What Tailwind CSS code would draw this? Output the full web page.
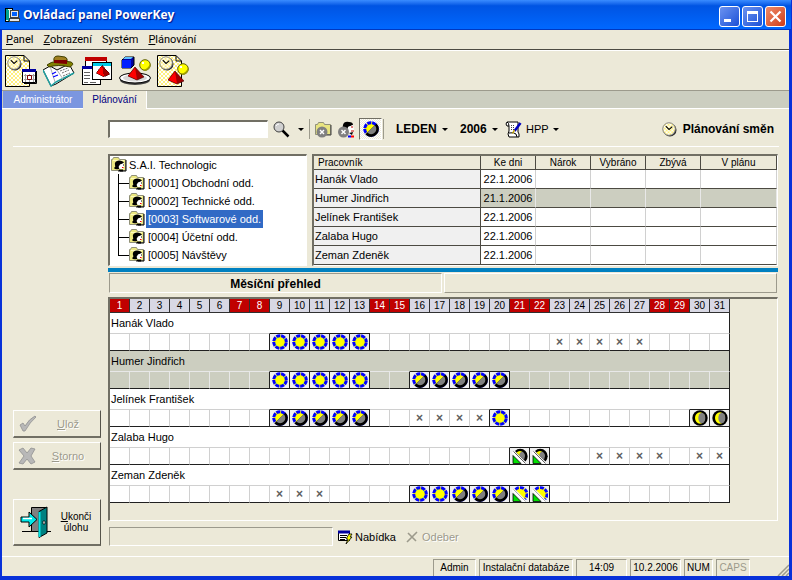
<!DOCTYPE html>
<html lang="cs">
<head>
    <meta charset="UTF-8">
    <meta name="viewport" content="width=device-width, initial-scale=1.0">
    <title>Ovládací panel PowerKey</title>
    <script src="https://cdn.jsdelivr.net/npm/@tailwindcss/browser@4"></script>
</head>
<body class="bg-[#ece9d8] font-['Liberation_Sans',sans-serif] text-[11px] leading-[14px] text-black">

    <!-- Ikony -->
    <svg class="absolute size-0" aria-hidden="true">
        <defs>
            <pattern id="dots" width="4" height="4" patternUnits="userSpaceOnUse">
                <rect width="4" height="4" fill="#fff"/>
                <path d="M0 0h2v2h-2zM2 2h2v2h-2z" fill="#fff080"/>
            </pattern>
            <pattern id="check" width="2" height="2" patternUnits="userSpaceOnUse">
                <rect width="2" height="2" fill="#ece9d8"/>
                <path d="M0 0h1v1h-1zM1 1h1v1h-1z" fill="#fff"/>
            </pattern>
        </defs>
        <symbol id="day" viewBox="0 0 16 16">
            <circle cx="8" cy="8" r="7" fill="#ffff00"/>
            <circle cx="8" cy="8" r="6.3" fill="none" stroke="#0000ff" stroke-width="3" stroke-dasharray="4.1 .85" stroke-dashoffset="-.4"/>
            <circle cx="8" cy="8" r="4.8" fill="none" stroke="#00ffff" stroke-width=".8" stroke-dasharray="1 6.540" stroke-dashoffset="-3.270"/>
        </symbol>
        <symbol id="mixed" viewBox="0 0 16 16">
            <circle cx="8" cy="8" r="7" fill="#ffff00"/>
            <circle cx="8" cy="8" r="6.3" fill="none" stroke="#0000ff" stroke-width="3" stroke-dasharray="4.1 .85" stroke-dashoffset="-.4"/>
            <path d="M13.6 2.4A7.8 7.8 0 0 1 2.4 13.6z" fill="#000"/>
            <path d="M11.8 4.2A5.1 5.1 0 0 1 4.4 11.6z" fill="#808080"/>
        </symbol>
        <symbol id="night" viewBox="0 0 16 16">
            <circle cx="8" cy="8" r="7.700" fill="#000"/>
            <ellipse cx="8" cy="8" rx="5" ry="5.800" fill="#ffff00"/>
            <ellipse cx="9.800" cy="8" rx="3.500" ry="5.300" fill="#808080"/>
        </symbol>
        <symbol id="halfnight" viewBox="0 0 16 16">
            <path d="M3 3A7.300 7.300 0 1 1 13.500 13.500z" fill="#000"/>
            <path d="M4.500 4.500Q7 2 10 3.500L8 8z" fill="#ffff00"/>
            <path d="M7.500 7.500Q7 4.500 10 3.500Q13 5 13 8L12 12z" fill="#808080"/>
            <path d="M1 7.500v8h8z" fill="#00e000" stroke="#000" stroke-width=".8"/>
            <path d="M.500 4L12.500 16" stroke="#fff" stroke-width="2"/>
            <path d="M1.500 3.500L13.500 15.500" stroke="#000" stroke-width=".6"/>
        </symbol>
        <symbol id="halfday" viewBox="0 0 16 16">
            <path d="M3 3A7.300 7.300 0 1 1 13.500 13.500z" fill="#ffff00"/>
            <path d="M3.500 3.500A6.500 6.500 0 1 1 13 13" fill="none" stroke="#0000ff" stroke-width="2.800" stroke-dasharray="3.800 1.100"/>
            <path d="M1 7.500v8h8z" fill="#00e000" stroke="#000" stroke-width=".8"/>
            <path d="M.500 4L12.500 16" stroke="#fff" stroke-width="2"/>
            <path d="M1.500 3.500L13.500 15.500" stroke="#808080" stroke-width=".6"/>
        </symbol>
        <symbol id="dept" viewBox="0 0 16 16">
            <path d="M.500 2.500h1l1-2h5l1 2h6v11H.500z" fill="#ece880" stroke="#909078"/>
            <path d="M2 3.500h11" stroke="#fffcc0"/>
            <path d="M15 3v11H9" fill="none" stroke="#000"/>
            <path d="M4 8Q3 4 8 3.500Q12 3.500 13 6L9 8L8 12Q4 13 3 11Q5 10 4 8z" fill="#000"/>
            <path d="M9 7.500L13 6V9.500L12 12H9L7.500 10z" fill="#fff"/>
            <path d="M12 8h1" stroke="#000"/><path d="M11 10.500h1.500" stroke="#f00"/>
            <path d="M8 12.500h4v2H7z" fill="#000"/>
        </symbol>
        <symbol id="clock" viewBox="0 0 16 16">
            <circle cx="8.500" cy="8.500" r="7" fill="#303030"/>
            <circle cx="7.500" cy="7.500" r="6.700" fill="url(#dots)" stroke="#808080"/>
            <path d="M4 4.500L7.500 8L11 5" fill="none" stroke="#000" stroke-width="1.200"/>
        </symbol>
        <symbol id="page" viewBox="0 0 32 32">
            <path d="M1 1h18l5 5v25H1z" fill="url(#dots)"/>
            <path d="M24.500 6v25.500H.5V.5H19L24.500 6H19V.5" fill="none" stroke="#000"/>
        </symbol>
        <symbol id="pyramid" viewBox="0 0 16 14">
            <path d="M7 0L0 9L9 13L16 10z" fill="#a00000"/>
            <path d="M7 0L0 9L9 13z" fill="#ff0000"/>
            <path d="M7 0L0 9L9 13L16 10z" fill="none" stroke="#400000" stroke-width=".6"/>
        </symbol>
        <symbol id="ball" viewBox="0 0 12 12">
            <circle cx="6" cy="6" r="5.300" fill="#ffff00" stroke="#606000"/>
            <path d="M11 5A5 5 0 0 1 4 11Q9 10 11 5" fill="#a0a000"/>
            <path d="M3 4h2" stroke="#fff" stroke-width="2"/>
        </symbol>
        <symbol id="arrow" viewBox="0 0 6 3"><path d="M0 0h6L3 3z"/></symbol>
    </svg>

    <div class="flex min-h-screen flex-col border-x-2 border-b-4 border-[#0831d9] border-r-[3px]">

        <!-- Titulek okna -->
        <header class="-mx-0.5 flex h-[30px] items-center border-b border-[#0038c0] bg-linear-to-b from-[#3a8cff] via-[#0054e3] via-20% to-[#0068ff] pr-[5px] pl-1">
            <svg class="h-4 w-4" viewBox="0 0 16 16" shape-rendering="crispEdges">
                <path d="M1 1h7v13H1z" fill="#e8f8f0" stroke="#000"/>
                <path d="M2 2l3 1v11l-3-1z" fill="#00a090"/>
                <path d="M6.500 3.500h8v7h-8z" fill="#e8e8e8" stroke="#404040"/>
                <path d="M8 5h5v4H8z" fill="#0060ff"/>
                <path d="M5.500 11.500h10v3h-10z" fill="#e8e8e8" stroke="#404040"/>
            </svg>
            <h1 class="ml-[3px] grow font-['Open_Sans',sans-serif] text-[12px] leading-4 font-bold text-white text-shadow-[1px_1px_1px_#00138c]">Ovládací panel PowerKey</h1>
            <div class="mt-1 flex gap-0.5">
                <button aria-label="Minimalizovat" class="size-[21px] rounded-[3px] border border-white bg-linear-to-br from-[#6b92f0] to-[#1c4fd6]">
                    <svg viewBox="0 0 19 19"><path d="M4 12h7v3H4z" fill="#fff"/></svg>
                </button>
                <button aria-label="Maximalizovat" class="size-[21px] rounded-[3px] border border-white bg-linear-to-br from-[#6b92f0] to-[#1c4fd6]">
                    <svg viewBox="0 0 19 19"><path d="M4 4h11v11H4zM5 7v7h9V7z" fill="#fff" fill-rule="evenodd"/></svg>
                </button>
                <button aria-label="Zavřít" class="size-[21px] rounded-[3px] border border-white bg-linear-to-br from-[#ee8a68] to-[#d03a10]">
                    <svg viewBox="0 0 19 19"><path d="M4.500 4.500l10 10M14.500 4.500l-10 10" stroke="#fff" stroke-width="2.200"/></svg>
                </button>
            </div>
        </header>

        <!-- Menu -->
        <nav class="flex h-5 items-center gap-2.5 border-b border-[#4c4a42] px-1 font-['Roboto',sans-serif]">
            <a href="#"><u>P</u>anel</a>
            <a href="#"><u>Z</u>obrazení</a>
            <a href="#">Systém</a>
            <a href="#"><u>P</u>lánování</a>
        </nav>

        <!-- Panel nástrojů -->
        <div class="flex h-[41px] items-center gap-1.5 border-t border-b border-t-white border-b-[#9c9a8c] px-[3px]">
            <button aria-label="Kalendář">
                <svg class="size-8" viewBox="0 0 32 32">
                    <use href="#page" width="32" height="32"/>
                    <use href="#clock" x="2" y="1" width="15" height="15"/>
                    <path d="M17.500 14.500h13v13h-13z" fill="#fff" stroke="#000"/>
                    <path d="M17 14h14v3H17z" fill="#0000a0"/>
                    <path d="M19 20.500h11M19 24.500h11M20.500 19v8M24.500 19v8M28.500 19v8" stroke="#a0a0a0"/>
                    <path d="M22.500 20.500h4v4h-4z" fill="#fff" stroke="#800000"/>
                    <path d="M19 28.500h12.500V16" fill="none" stroke="#000"/>
                </svg>
            </button>
            <button aria-label="Kniha">
                <svg class="size-8" viewBox="0 0 32 32">
                    <path d="M0 15L7 11L14 15L26 9L31 18L13 29L8 31z" fill="#fff" stroke="#000"/>
                    <path d="M0 15L8 31L13 27L31 18" fill="none" stroke="#20a0a0" stroke-width="1.500"/>
                    <path d="M7 11L12 27M14 15L20 24" stroke="#b0b0b0"/>
                    <path d="M17 16l8-3M19 18l7-3M20 21l7-3" stroke="#707070" stroke-dasharray="2 1"/>
                    <path d="M9 19l4-2M10 22l5-2" stroke="#0000ff" stroke-width="1.200"/>
                    <path d="M4 10Q11 4 28 7Q32 9 27 12Q15 9 6 12z" fill="#808000" stroke="#404000"/>
                    <path d="M11 6Q10 1 15 1L22 2Q25 3 24 7z" fill="#a08020" stroke="#404000"/>
                    <path d="M11 5h13v4l-13-1z" fill="#800000"/>
                </svg>
            </button>
            <button aria-label="Formuláře">
                <svg class="size-8" viewBox="0 0 32 32" shape-rendering="crispEdges">
                    <path d="M4.500 2.500h21v20h-21z" fill="#fff" stroke="#000"/><path d="M4 2h22v4H4z" fill="#c00000"/>
                    <path d="M1.500 11.500h18v18h-18z" fill="#fff" stroke="#000"/><path d="M1 11h19v3H1z" fill="#0000a0"/>
                    <path d="M3 17.500h6M3 20.500h6M3 23.500h6M3 27.500h4M9 27.500h6" stroke="#606060"/>
                    <path d="M11.500 7.500h19v17h-19z" fill="#fff" stroke="#000"/><path d="M12 8h18v3H12z" fill="#00c8e8"/>
                    <use href="#pyramid" x="15" y="10" width="14" height="13"/>
                </svg>
            </button>
            <button aria-label="Objekty">
                <svg class="size-8" viewBox="0 0 32 32">
                    <ellipse cx="16" cy="25" rx="15" ry="5" fill="#404040"/>
                    <ellipse cx="16" cy="23" rx="15.500" ry="5" fill="#fff" stroke="#000"/>
                    <ellipse cx="16" cy="23" rx="12" ry="3.500" fill="#d8d8d8"/>
                    <path d="M3 5l3-3h9v8l-3 3H3z" fill="#0000a0" stroke="#000"/><path d="M3 5h9v8H3z" fill="#0020ff"/>
                    <path d="M4 4l2-2h8l-2 2z" fill="#60c0ff"/>
                    <use href="#ball" x="20" y="4" width="12" height="12"/>
                    <use href="#pyramid" x="9" y="12" width="16" height="14"/>
                </svg>
            </button>
            <button aria-label="Plánování">
                <svg class="size-8" viewBox="0 0 32 32">
                    <use href="#page" width="32" height="32"/>
                    <use href="#clock" x="2" y="1" width="15" height="15"/>
                    <use href="#ball" x="20" y="8" width="12" height="12"/>
                    <use href="#pyramid" x="11" y="16" width="16" height="14"/>
                </svg>
            </button>
        </div>

        <!-- Záložky -->
        <div class="flex h-[18px] border-b border-white bg-[#cccec0] pl-px text-[10px]">
            <button class="w-20 bg-[#7b96e0] text-white">Administrátor</button>
            <button class="-mb-px w-16 border-r border-white bg-[#ece9d8] text-[#000080]">Plánování</button>
        </div>

        <!-- Filtr a období -->
        <div class="mr-2.5 ml-[11px] flex h-[38px] items-center border-b border-white pt-[3px] pl-[95px]">
            <input type="text" aria-label="Hledat" class="mr-[5px] h-[18px] w-40 border-t-2 border-l-2 border-r border-b border-t-[#716f64] border-l-[#716f64] border-r-white border-b-white bg-white px-1">
            <button aria-label="Najít" class="flex items-center gap-2">
                <svg class="size-[17px]" viewBox="0 0 17 17">
                    <path d="M9.500 9.500l6 6" stroke="#000" stroke-width="2.500"/>
                    <circle cx="6" cy="6" r="5" fill="#d0d0d0" stroke="#404040"/><path d="M3 5q1-2 3-2" stroke="#fff" fill="none"/>
                </svg>
                <svg class="h-[3px] w-1.5"><use href="#arrow"/></svg>
            </button>
            <div class="mr-[5px] ml-[5px] h-5 border-l border-[#9c9a8c]"></div>
            <button aria-label="Zrušit oddělení" class="mr-1.5">
                <svg class="size-[17px]" viewBox="0 0 17 17">
                    <path d="M.500 3.500h2l1-2h5l1 2h6v10H.500z" fill="#e8e480" stroke="#909078"/>
                    <path d="M16 4v10H8" fill="none" stroke="#404040"/>
                    <circle cx="7" cy="11" r="5.500" fill="#808080"/><path d="M5 9l4 4M9 9l-4 4" stroke="#fff" stroke-width="1.400"/>
                </svg>
            </button>
            <button aria-label="Zrušit pracovníka" class="mr-1">
                <svg class="size-[17px]" viewBox="0 0 17 17">
                    <path d="M5 4Q6 0 11 1Q15 1 15 4L10 6L9 10H4z" fill="#000"/>
                    <path d="M10 6L15 4L16 9L14 13H10z" fill="#fff"/>
                    <path d="M13 6h2M13 10h3" stroke="#c00000"/><path d="M11 12l4-1-1 3z" fill="#000"/>
                    <path d="M10 15.500h3" stroke="#00f" stroke-width="2"/><path d="M13 15.500h3" stroke="#f00" stroke-width="2"/>
                    <circle cx="5.500" cy="11" r="5.500" fill="#808080"/><path d="M3.500 9l4 4M7.500 9l-4 4" stroke="#fff" stroke-width="1.400"/>
                </svg>
            </button>
            <button aria-label="Směny" class="h-[22px] w-[23px] border border-t-[#716f64] border-r-white border-b-white border-l-[#716f64]">
                <svg class="h-5 w-[21px]" viewBox="0 0 21 20">
                    <rect width="21" height="20" fill="url(#check)"/>
                    <use href="#mixed" x="3" y="2" width="16" height="16"/>
                </svg>
            </button>
            <div class="mr-3 ml-px h-5 border-l border-[#9c9a8c]"></div>
            <label class="mr-3 flex items-center gap-[5px] text-xs font-bold">
                <select aria-label="Měsíc" class="appearance-none"><option>LEDEN</option></select>
                <svg class="h-[3px] w-1.5"><use href="#arrow"/></svg>
            </label>
            <label class="mr-[7px] flex items-center gap-[5px] text-xs font-bold">
                <select aria-label="Rok" class="appearance-none"><option>2006</option></select>
                <svg class="h-[3px] w-1.5"><use href="#arrow"/></svg>
            </label>
            <label class="flex items-center gap-1">
                <svg class="size-[17px]" viewBox="0 0 17 17">
                    <path d="M2 1h11v10l1 2v3H4l-1-3 1-3V5H2Q0 3 2 1z" fill="#fff" stroke="#000"/>
                    <path d="M2 1q2 1 2 4M4 12q5-1 7 1l1 3" fill="none" stroke="#000"/>
                    <path d="M6 4.500h4M6 6.500h4M6 8.500h3" stroke="#404040" stroke-dasharray="1 1"/>
                    <path d="M15.500 2l-6 8" stroke="#0000c0" stroke-width="2.500"/><path d="M9.500 9l-2 3.500" stroke="#c0a000" stroke-width="1.500"/>
                </svg>
                <select aria-label="Typ úvazku" class="appearance-none"><option>HPP</option></select>
                <svg class="h-[3px] w-1.5"><use href="#arrow"/></svg>
            </label>
            <h2 class="ml-auto flex items-center gap-1.5 pr-[5px] text-xs font-bold">
                <svg class="size-[15px]"><use href="#clock"/></svg>
                Plánování směn
            </h2>
        </div>

        <main class="flex grow gap-[7px] pt-[7px] pr-[11px] pb-2.5 pl-[11px]">
            <!-- Tlačítka -->
            <div class="flex w-[88px] shrink-0 flex-col justify-end">
                <button disabled class="mb-1 flex h-7 items-center border border-t-white border-r-[#55534a] border-b-2 border-b-[#716f64] border-l-white pl-1 text-[#9c9a8c] text-shadow-[1px_1px_0_#fff]">
                    <svg class="size-[18px]" viewBox="0 0 18 18"><path d="M2 10l3-2 2 3Q11 4 17 1l1 1Q12 7 7 16H5z" fill="#b8b8b8" stroke="#909090" stroke-width=".8"/></svg>
                    <span class="grow"><u>U</u>lož</span>
                </button>
                <button disabled class="mb-[29px] flex h-7 items-center border border-t-white border-r-[#55534a] border-b-2 border-b-[#716f64] border-l-white pl-1 text-[#9c9a8c] text-shadow-[1px_1px_0_#fff]">
                    <svg class="size-[18px]" viewBox="0 0 18 18"><path d="M1 3l4-2 4 5 4-5 4 1-4 7 4 6-4 2-4-5-4 5-4-1 5-7z" fill="#b8b8b8" stroke="#909090" stroke-width=".8"/></svg>
                    <span class="grow"><u>S</u>torno</span>
                </button>
                <button class="flex h-[47px] items-center border border-t-white border-r-[#55534a] border-b-2 border-b-[#716f64] border-l-white pl-1.5 text-[10px] leading-[11px]">
                    <svg class="size-8" viewBox="0 0 32 32">
                        <path d="M2 25.500h29" stroke="#000"/>
                        <path d="M11.500 1.500h15v24h-15z" fill="#808080" stroke="#000"/>
                        <path d="M19 5.500l8-4.500v26l-8 4.500z" fill="#008080" stroke="#000"/>
                        <path d="M19.500 6v25" stroke="#00e8e8" stroke-width="2"/>
                        <path d="M23 15h2v3h-2z" fill="#fff" stroke="#000" stroke-width=".7"/>
                        <path d="M1 11h8V6l8 7.500L9 21v-5H1z" fill="#00e8e8" stroke="#000"/><path d="M3 12.500h9" stroke="#fff" stroke-width="1.500"/>
                    </svg>
                    <span class="grow"><u>U</u>konči<br>úlohu</span>
                </button>
            </div>

            <div class="flex min-w-0 grow flex-col">
                <div class="flex gap-[5px]">
                    <!-- Strom oddělení -->
                    <ul id="tree" class="w-[199px] shrink-0 border-t-2 border-l-2 border-r border-b border-t-[#716f64] border-l-[#716f64] border-r-white border-b-white bg-white"></ul>

                    <!-- Pracovníci -->
                    <div class="grow border-t-2 border-l-2 border-r border-b border-t-[#716f64] border-l-[#716f64] border-r-white border-b-white">
                        <table class="w-full table-fixed border-separate border-spacing-0 bg-white">
                            <thead class="text-[10px] leading-[13px]">
                                <tr>
                                    <th class="border-r border-b border-[#4c4a42] bg-[#ece9d8] pl-1 text-left font-normal">Pracovník</th>
                                    <th class="w-[55px] border-r border-b border-[#4c4a42] bg-[#ece9d8] font-normal">Ke dni</th>
                                    <th class="w-[55px] border-r border-b border-[#4c4a42] bg-[#ece9d8] font-normal">Nárok</th>
                                    <th class="w-[55px] border-r border-b border-[#4c4a42] bg-[#ece9d8] font-normal">Vybráno</th>
                                    <th class="w-[55px] border-r border-b border-[#4c4a42] bg-[#ece9d8] font-normal">Zbývá</th>
                                    <th class="w-[76px] border-r border-b border-[#4c4a42] bg-[#ece9d8] font-normal">V plánu</th>
                                </tr>
                            </thead>
                            <tbody id="workers"></tbody>
                        </table>
                    </div>
                </div>

                <div class="mt-0.5 h-1 bg-[#0080c0]"></div>

                <div class="mb-1 flex gap-0.5 px-px pt-px">
                    <h3 class="h-5 grow basis-0 border border-t-[#9c9a8c] border-r-white border-b-white border-l-[#9c9a8c] text-center text-xs leading-5 font-bold">Měsíční přehled</h3>
                    <div class="h-5 grow basis-0 border border-t-white border-r-[#9c9a8c] border-b-[#9c9a8c] border-l-white"></div>
                </div>

                <!-- Měsíční přehled směn -->
                <div class="grow border-t-2 border-l-2 border-r border-b border-t-[#716f64] border-l-[#716f64] border-r-white border-b-white">
                    <table class="table-fixed border-separate border-spacing-0 bg-white">
                        <thead class="text-[10px] leading-[13px]"><tr id="days"></tr></thead>
                        <tbody id="month"></tbody>
                    </table>
                </div>

                <div class="mt-1.5 flex items-center gap-1 pl-px">
                    <input type="text" disabled aria-label="Poznámka" class="h-[19px] w-56 border border-t-[#9c9a8c] border-r-white border-b-white border-l-[#9c9a8c] bg-[#ece9d8]">
                    <button class="mr-1.5 flex items-center gap-0.5">
                        <svg class="size-4" viewBox="0 0 16 16">
                            <path d="M1.500 2.500h11v9h-11z" fill="#fff" stroke="#000"/><path d="M1 1.500h12v3H1z" fill="#0000a0"/>
                            <path d="M3 6.500h7M3 8.500h6M3 10.500h5" stroke="#000"/>
                            <path d="M12 5h3l-2 3h2l-6 7 2-5H9z" fill="#ffff00" stroke="#000" stroke-width=".8"/>
                        </svg>
                        Nabídka
                    </button>
                    <button disabled class="flex items-center gap-1 text-[#9c9a8c] text-shadow-[1px_1px_0_#fff]">
                        <svg class="size-3" viewBox="0 0 12 12"><path d="M2 2l8 8M11 1L1 11" stroke="#9c9a8c" stroke-width="1.600"/></svg>
                        Odeber
                    </button>
                </div>
            </div>
        </main>

        <!-- Stavový řádek -->
        <footer class="flex h-5 items-end justify-end gap-[3px] border-t border-white text-center text-[10px] leading-4">
            <span class="h-[17px] w-[43px] border border-t-[#9c9a8c] border-r-white border-b-0 border-l-[#9c9a8c]">Admin</span>
            <span class="h-[17px] w-[94px] border border-t-[#9c9a8c] border-r-white border-b-0 border-l-[#9c9a8c] whitespace-nowrap">Instalační databáze</span>
            <span class="h-[17px] w-[51px] border border-t-[#9c9a8c] border-r-white border-b-0 border-l-[#9c9a8c]">14:09</span>
            <span class="h-[17px] w-[51px] border border-t-[#9c9a8c] border-r-white border-b-0 border-l-[#9c9a8c]">10.2.2006</span>
            <span class="h-[17px] w-[29px] border border-t-[#9c9a8c] border-r-white border-b-0 border-l-[#9c9a8c]">NUM</span>
            <span class="h-[17px] w-[34px] border border-t-[#9c9a8c] border-r-white border-b-0 border-l-[#9c9a8c] text-[#9c9a8c]">CAPS</span>
            <svg class="ml-6 size-3" viewBox="0 0 12 12"><path d="M1 12L12 1M5 12l7-7M9 12l3-3" stroke="#9c9a8c" stroke-width="1.500"/></svg>
        </footer>
    </div>

    <script>
        const departments = ['[0001] Obchodní odd.', '[0002] Technické odd.', '[0003] Softwarové odd.', '[0004] Účetní odd.', '[0005] Návštěvy'];
        const selectedDepartment = 2;

        // první a poslední den bloku, druh směny
        const workers = [
            { name: 'Hanák Vlado', date: '22.1.2006', shifts: [[9, 13, 'day'], [23, 27, 'x']] },
            { name: 'Humer Jindřich', date: '21.1.2006', selected: true, shifts: [[9, 13, 'day'], [16, 20, 'mixed']] },
            { name: 'Jelínek František', date: '22.1.2006', shifts: [[9, 13, 'mixed'], [16, 19, 'x'], [20, 20, 'day'], [30, 31, 'night']] },
            { name: 'Zalaba Hugo', date: '22.1.2006', shifts: [[21, 22, 'halfnight'], [25, 28, 'x'], [30, 31, 'x']] },
            { name: 'Zeman Zdeněk', date: '22.1.2006', shifts: [[9, 11, 'x'], [16, 17, 'day'], [18, 20, 'mixed'], [21, 22, 'halfday']] }
        ];
        const holidays = [1, 7, 8, 14, 15, 21, 22, 28, 29];
        const DAYS = 31;

        // Strom oddělení
        let tree = `<li class="flex h-[18px] items-center gap-0.5 pl-px"><svg class="size-4"><use href="#dept"/></svg><span>S.A.I. Technologic</span></li>`;
        departments.forEach((text, i) => {
            const end = i === departments.length - 1 ? 9 : 18;
            const mark = i === selectedDepartment ? 'bg-[#316ac5] px-0.5 leading-[18px] text-white' : 'px-0.5 leading-[18px]';
            tree += `<li class="flex h-[18px] items-center pl-2">
                <svg class="h-[18px] w-[11px]" viewBox="0 0 11 18"><path d="M.5 0v${end}M0 9.5h11" stroke="#000" fill="none"/></svg>
                <svg class="mr-px size-4"><use href="#dept"/></svg><span class="${mark}">${text}</span></li>`;
        });
        document.getElementById('tree').innerHTML = tree;

        // Tabulka pracovníků
        document.getElementById('workers').innerHTML = workers.map(w => {
            const cell = w.selected
                ? 'border-r border-b border-r-[#e8e8e8] border-b-[#4c4a42] bg-[#cccec0]'
                : 'border-r border-b border-r-[#d0d0d0] border-b-[#4c4a42]';
            return `<tr class="h-[19px]">
                <td class="border-r border-b border-[#4c4a42] bg-[#f0f0f0] pl-px">${w.name}</td>
                <td class="${cell} text-center">${w.date}</td>
                <td class="${cell}"></td><td class="${cell}"></td><td class="${cell}"></td><td class="${cell}"></td></tr>`;
        }).join('');

        // Hlavička měsíce
        let days = '';
        for (let d = 1; d <= DAYS; d++) {
            const color = holidays.includes(d) ? 'bg-[#c00000] text-white' : 'bg-[#d8d8e4]';
            days += `<th class="w-5 border-r border-b border-[#303030] ${color} p-0 text-center font-normal">${d}</th>`;
        }
        document.getElementById('days').innerHTML = days;

        // Řádky měsíce
        document.getElementById('month').innerHTML = workers.map(w => {
            const plan = {};
            w.shifts.forEach(([from, to, kind]) => {
                for (let d = from; d <= to; d++) plan[d] = kind;
            });
            const isIcon = d => plan[d] && plan[d] !== 'x';
            let cells = '';
            for (let d = 1; d <= DAYS; d++) {
                const right = isIcon(d) || isIcon(d + 1) || d === DAYS ? 'border-r-[#202020]' : w.selected ? 'border-r-[#e8e8e8]' : 'border-r-[#d0d0d0]';
                const top = isIcon(d) ? 'border-t-[#202020] bg-[#f0f0f0]' : w.selected ? 'border-t-[#e8e8e8]' : 'border-t-[#d0d0d0]';
                const content = isIcon(d) ? `<svg class="mx-auto block size-4"><use href="#${plan[d]}"/></svg>` : plan[d] ? '×' : '';
                cells += `<td class="border-t border-r border-b border-b-[#202020] ${right} ${top} p-0 text-center text-xs leading-4 font-bold text-[#606060]">${content}</td>`;
            }
            const row = w.selected ? 'bg-[#cccec0]' : 'bg-white';
            return `<tr class="h-5 ${row}"><td colspan="${DAYS}" class="border-r border-[#202020] px-px">${w.name}</td></tr>
                <tr class="h-[18px] ${row}">${cells}</tr>`;
        }).join('');
    </script>
</body>
</html>
